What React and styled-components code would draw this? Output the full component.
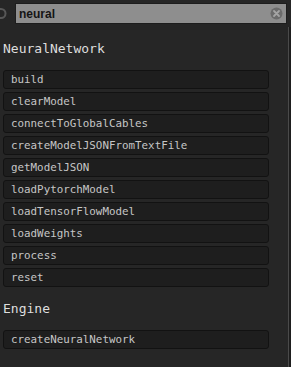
import React from "react";
import styled, { createGlobalStyle } from "styled-components";

const GlobalStyle = createGlobalStyle`
    html, body {
        margin: 0;
        padding: 0;
        background: #262626;
        overflow: hidden;
    }
`;

const Panel = styled.div`
    width: 291px;
    height: 367px;
    display: flex;
    flex-direction: column;
    background: #262626;
`;

const SearchBar = styled.div`
    height: 27px;
    display: flex;
    align-items: flex-start;
    padding-top: 3px;
    box-sizing: border-box;
`;

const SearchIcon = styled.svg`
    width: 15px;
    height: 21px;
    flex: none;
`;

const SearchField = styled.div`
    width: 272px;
    height: 21px;
    box-sizing: border-box;
    display: flex;
    align-items: center;
    background: #8e8e8e;
    border: 1px solid #1d1d1d;
    padding: 0 3px 0 3px;
`;

const SearchInput = styled.input`
    flex: 1;
    min-width: 0;
    border: none;
    outline: none;
    background: transparent;
    padding: 0;
    font-family: "Liberation Sans", Arial, sans-serif;
    font-size: 12px;
    font-weight: bold;
    color: #151515;
`;

const ClearIcon = styled.svg`
    width: 13px;
    height: 13px;
    flex: none;
`;

const Body = styled.div`
    flex: 1;
    display: flex;
    min-height: 0;
`;

const Content = styled.div`
    width: 288px;
    box-sizing: border-box;
    padding: 14px 19px 0 3px;
`;

const Scrollbar = styled.div`
    width: 3px;
    box-sizing: border-box;
    border-left: 1px solid #4a4a4a;
    background: #1e1e1e;
`;

const Section = styled.section`
    & + & {
        margin-top: 14px;
    }
`;

const Heading = styled.h2`
    margin: 0 0 13px 0;
    font-family: "DejaVu Sans Mono", monospace;
    font-size: 13px;
    line-height: 16px;
    font-weight: normal;
    color: #dedede;
`;

const List = styled.div`
    display: flex;
    flex-direction: column;
    gap: 3px;
`;

const Item = styled.div`
    height: 19px;
    box-sizing: border-box;
    padding: 1px 7px 0;
    background: #1e1e1e;
    border: 1px solid #121212;
    border-radius: 3px;
    font-family: "DejaVu Sans Mono", monospace;
    font-size: 10.85px;
    line-height: 16px;
    color: #c6c6c6;
    white-space: nowrap;
`;

const sections = [
    {
        title: "NeuralNetwork",
        items: [
            "build",
            "clearModel",
            "connectToGlobalCables",
            "createModelJSONFromTextFile",
            "getModelJSON",
            "loadPytorchModel",
            "loadTensorFlowModel",
            "loadWeights",
            "process",
            "reset",
        ],
    },
    { title: "Engine", items: ["createNeuralNetwork"] },
];

export default function App() {
    return (
        <>
            <GlobalStyle />
            <Panel>
                <SearchBar>
                    <SearchIcon viewBox="0 0 15 21">
                        <circle cx="1" cy="10.5" r="4.5" fill="none" stroke="#575757" strokeWidth="2" />
                    </SearchIcon>
                    <SearchField>
                        <SearchInput defaultValue="neural" />
                        <ClearIcon viewBox="0 0 13 13">
                            <circle cx="6.5" cy="6.5" r="6" fill="#6b6b6b" />
                            <path d="M4 4 L9 9 M9 4 L4 9" stroke="#a4a4a4" strokeWidth="1.8" strokeLinecap="round" />
                        </ClearIcon>
                    </SearchField>
                </SearchBar>
                <Body>
                    <Content>
                        {sections.map((s) => (
                            <Section key={s.title}>
                                <Heading>{s.title}</Heading>
                                <List>
                                    {s.items.map((name) => (
                                        <Item key={name}>{name}</Item>
                                    ))}
                                </List>
                            </Section>
                        ))}
                    </Content>
                    <Scrollbar />
                </Body>
            </Panel>
        </>
    );
}
